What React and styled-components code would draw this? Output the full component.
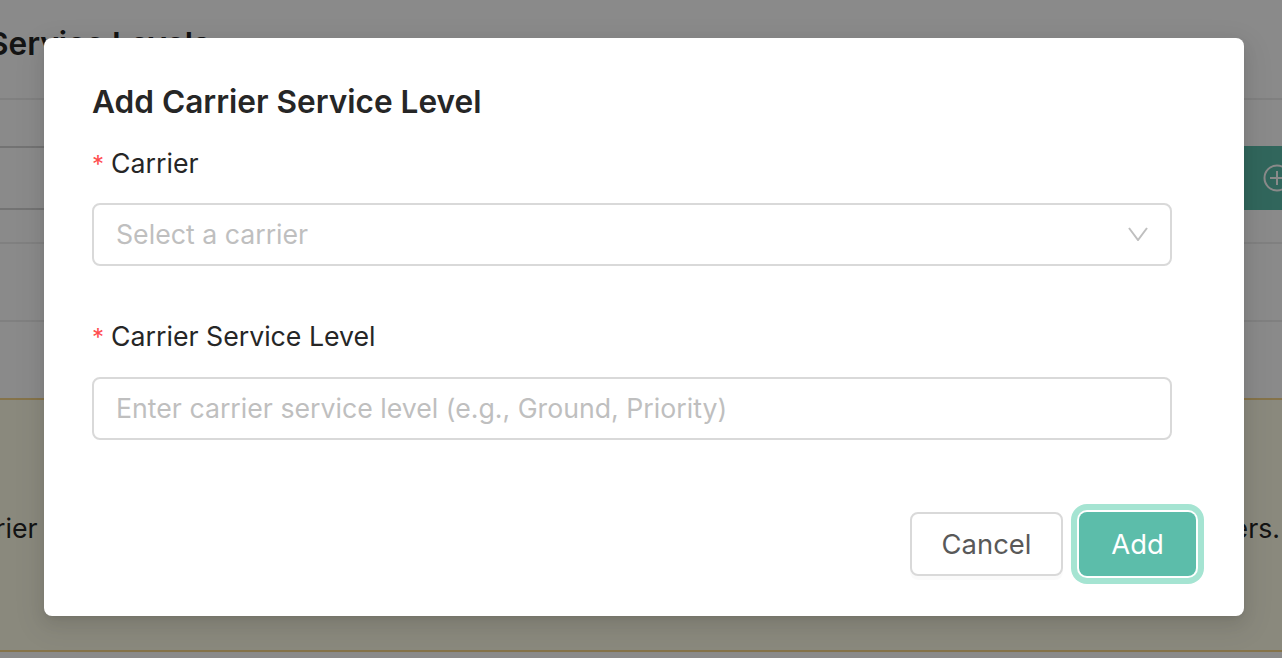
import React from 'react'
import styled, { createGlobalStyle } from 'styled-components'

const GlobalStyle = createGlobalStyle`
  html, body {
    margin: 0;
    padding: 0;
    height: 100%;
    overflow: hidden;
    background: #fff;
    font-family: Inter, "Noto Sans", sans-serif;
  }
`

const Page = styled.div`
  position: relative;
  width: 1282px;
  height: 658px;
  overflow: hidden;
  background: #fff;
`

const PageTitle = styled.h1`
  margin: 0 0 0 -12px;
  height: 98px;
  padding-top: 24px;
  box-sizing: border-box;
  font-size: 31.6px;
  line-height: 40px;
  font-weight: 600;
  color: #262626;
  white-space: nowrap;
`

const Row = styled.div`
  height: ${p => p.h}px;
  box-sizing: border-box;
  border-top: 2px solid ${p => p.strong ? '#d4d4d4' : '#ededed'};
`

const ToolRow = styled(Row)`
  display: flex;
  justify-content: flex-end;
`

const AddRowButton = styled.div`
  position: relative;
  width: 60px;
  height: 64px;
  margin: -2px -20px 0 0;
  background: #5cbdaa;
  display: flex;
  align-items: center;
  padding-left: 21px;
  box-sizing: border-box;
`

const Banner = styled.div`
  height: 254px;
  box-sizing: border-box;
  border-top: 2px solid #f5d48a;
  border-bottom: 2px solid #f5d48a;
  background: #fffde8;
  display: flex;
  justify-content: space-between;
  padding-top: 110px;
  font-size: 26.7px;
  line-height: 36px;
  color: #262626;
`

const BannerStart = styled.span`
  margin-left: -46px;
`

const BannerEnd = styled.span`
  margin-right: 2px;
`

const Overlay = styled.div`
  position: absolute;
  inset: 0;
  background: rgba(0, 0, 0, 0.46);
`

const Modal = styled.div`
  position: absolute;
  top: 38px;
  left: 44px;
  width: 1200px;
  height: 578px;
  box-sizing: border-box;
  padding: 44px 48px 0;
  background: #fff;
  border-radius: 8px;
  box-shadow: 0 6px 16px 0 rgba(0, 0, 0, 0.08), 0 3px 6px -4px rgba(0, 0, 0, 0.12), 0 9px 28px 8px rgba(0, 0, 0, 0.05);
  display: flex;
  flex-direction: column;
`

const Title = styled.div`
  font-size: 31.6px;
  line-height: 40px;
  font-weight: 600;
  color: #262626;
`

const Label = styled.label`
  display: block;
  font-size: 26.7px;
  line-height: 36px;
  color: #262626;
  margin-top: ${p => p.top}px;
`

const Star = styled.span`
  color: #ff4d4f;
  margin-right: 7px;
  font-size: 24px;
  line-height: 1;
`

const Field = styled.div`
  margin: ${p => p.gap}px 24px 0 0;
  height: 63px;
  box-sizing: border-box;
  border: 2px solid #d9d9d9;
  border-radius: 8px;
  padding: 0 22px 2px;
  display: flex;
  align-items: center;
  justify-content: space-between;
  font-size: 26.7px;
  color: #bfbfbf;
`

const Footer = styled.div`
  margin-top: 72px;
  display: flex;
  justify-content: flex-end;
  gap: 16px;
`

const Button = styled.div`
  width: ${p => p.w}px;
  height: 64px;
  box-sizing: border-box;
  border-radius: 8px;
  display: flex;
  align-items: center;
  justify-content: center;
  font-size: 27.4px;
`

const CancelButton = styled(Button)`
  background: #fff;
  border: 2px solid #d9d9d9;
  color: #595959;
  box-shadow: 0 4px 0 rgba(0, 0, 0, 0.02);
`

const AddButton = styled(Button)`
  background: #5cbdaa;
  color: #fff;
  box-shadow: 0 0 0 2px #fff, 0 0 0 8px #a5e4d2;
`

const Chevron = () => (
  <svg width="20" height="14" viewBox="0 0 20 14" fill="none" stroke="#bfbfbf" strokeWidth="2">
    <path d="M1 1l9 12 9-12" />
  </svg>
)

const PlusCircle = () => (
  <svg width="28" height="28" viewBox="0 0 28 28" fill="none" stroke="#fff" strokeWidth="2">
    <circle cx="14" cy="14" r="12.5" />
    <path d="M14 7v14M7 14h14" />
  </svg>
)

export default function App () {
  return (
    <Page>
      <GlobalStyle />
      <PageTitle>Service Levels</PageTitle>
      <Row h={48} />
      <ToolRow h={62} strong><AddRowButton><PlusCircle /></AddRowButton></ToolRow>
      <Row h={34} strong />
      <Row h={78} />
      <Row h={78} />
      <Banner>
        <BannerStart>carrier</BannerStart>
        <BannerEnd>carriers.</BannerEnd>
      </Banner>
      <Overlay />
      <Modal>
        <Title>Add Carrier Service Level</Title>
        <Label top={23}><Star>*</Star>Carrier</Label>
        <Field gap={22}>Select a carrier<Chevron /></Field>
        <Label top={52}><Star>*</Star>Carrier Service Level</Label>
        <Field gap={23}>Enter carrier service level (e.g., Ground, Priority)</Field>
        <Footer>
          <CancelButton w={153}>Cancel</CancelButton>
          <AddButton w={117}>Add</AddButton>
        </Footer>
      </Modal>
    </Page>
  )
}
